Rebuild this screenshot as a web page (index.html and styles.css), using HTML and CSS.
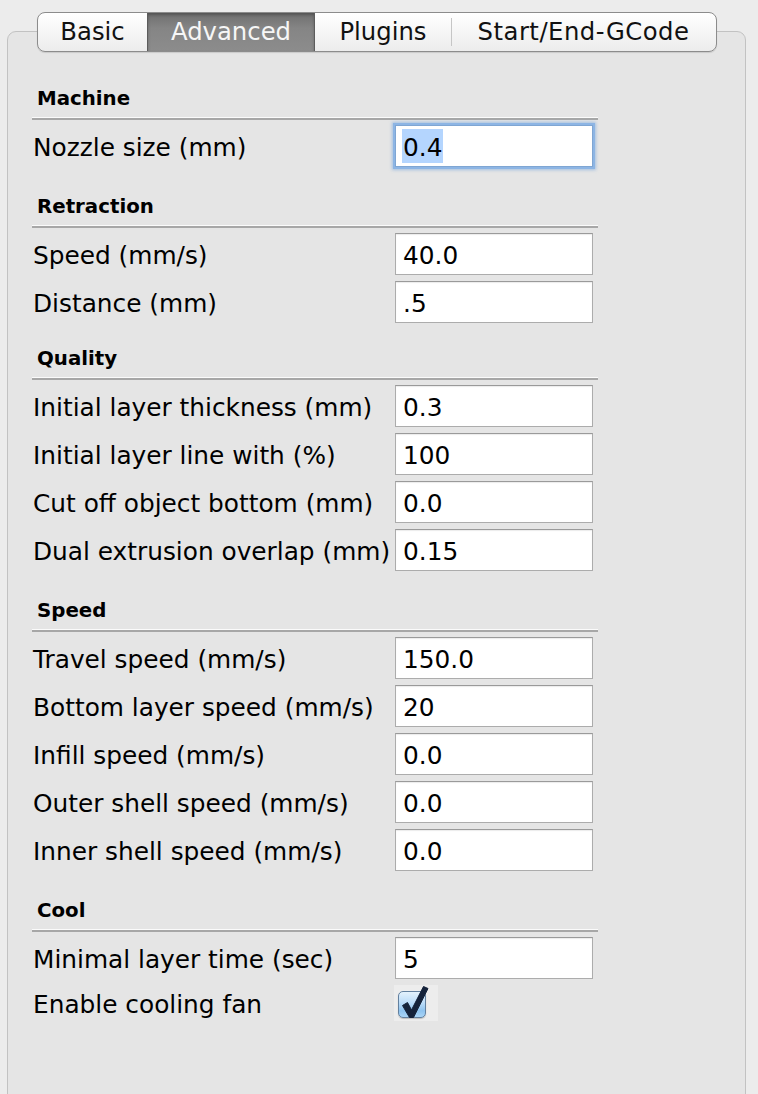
FILE: index.html
```html
<!DOCTYPE html>
<html lang="en">
<head>
<meta charset="utf-8">
<title>Advanced settings</title>
<link rel="stylesheet" href="styles.css">
</head>
<body>
<div class="window">
  <nav class="tabs">
    <div class="tab tab--basic">Basic</div>
    <div class="tab tab--active">Advanced</div>
    <div class="tab tab--plugins">Plugins</div>
    <div class="tab tab--gcode">Start/End-GCode</div>
  </nav>
  <div class="panel">
    <section class="section section--first">
      <h2 class="section-head">Machine</h2>
      <div class="sep"></div>
      <div class="rows">
        <div class="row"><span class="label">Nozzle size (mm)</span><div class="field field--focus"><span class="sel">0.4</span></div></div>
      </div>
    </section>
    <section class="section">
      <h2 class="section-head">Retraction</h2>
      <div class="sep"></div>
      <div class="rows">
        <div class="row"><span class="label">Speed (mm/s)</span><div class="field">40.0</div></div>
        <div class="row"><span class="label">Distance (mm)</span><div class="field">.5</div></div>
      </div>
    </section>
    <section class="section section--tight">
      <h2 class="section-head">Quality</h2>
      <div class="sep"></div>
      <div class="rows">
        <div class="row"><span class="label">Initial layer thickness (mm)</span><div class="field">0.3</div></div>
        <div class="row"><span class="label">Initial layer line with (%)</span><div class="field">100</div></div>
        <div class="row"><span class="label">Cut off object bottom (mm)</span><div class="field">0.0</div></div>
        <div class="row"><span class="label">Dual extrusion overlap (mm)</span><div class="field">0.15</div></div>
      </div>
    </section>
    <section class="section">
      <h2 class="section-head">Speed</h2>
      <div class="sep"></div>
      <div class="rows">
        <div class="row"><span class="label">Travel speed (mm/s)</span><div class="field">150.0</div></div>
        <div class="row"><span class="label">Bottom layer speed (mm/s)</span><div class="field">20</div></div>
        <div class="row"><span class="label">Infill speed (mm/s)</span><div class="field">0.0</div></div>
        <div class="row"><span class="label">Outer shell speed (mm/s)</span><div class="field">0.0</div></div>
        <div class="row"><span class="label">Inner shell speed (mm/s)</span><div class="field">0.0</div></div>
      </div>
    </section>
    <section class="section">
      <h2 class="section-head">Cool</h2>
      <div class="sep"></div>
      <div class="rows">
        <div class="row"><span class="label">Minimal layer time (sec)</span><div class="field">5</div></div>
        <div class="row row--check"><span class="label">Enable cooling fan</span>
          <div class="check">
            <div class="check-box"></div>
            <svg class="check-mark" width="44" height="36" viewBox="0 0 44 36">
              <path d="M8.5 20.5 L13.5 17.5 L17.5 25 L29.5 1.5 L34 3.5 L19.5 32.5 L15.5 32.5 Z" fill="#14223a" stroke="#14223a" stroke-width="1" stroke-linejoin="round"/>
            </svg>
          </div>
        </div>
      </div>
    </section>
  </div>
</div>
</body>
</html>
```
FILE: styles.css
```css
html, body {
  margin: 0;
  padding: 0;
  overflow: hidden;
  background: #ececec;
}

body {
  font-family: "DejaVu Sans", "Liberation Sans", sans-serif;
  color: #000;
}

.window {
  padding-top: 12px;
  height: 1094px;
  box-sizing: border-box;
}

.tabs {
  position: relative;
  z-index: 2;
  display: flex;
  margin-left: 37px;
  width: 680px;
  height: 40px;
  box-sizing: border-box;
  border: 1px solid #8c8c8c;
  border-radius: 8px;
  background: linear-gradient(#ffffff, #f6f6f6 50%, #ececec);
  box-shadow: 0 1px 1px rgba(0, 0, 0, 0.12);
  overflow: hidden;
}

.tab {
  position: relative;
  display: flex;
  align-items: center;
  justify-content: center;
  font-size: 24.3px;
  color: #111;
  box-sizing: border-box;
  padding-bottom: 2px;
}

.tab--basic { width: 109px; }
.tab--active {
  width: 168px;
  color: #f6f6f6;
  background: linear-gradient(#6e6e6e, #858585 40%, #8c8c8c);
  border-left: 1px solid #5c5c5c;
  border-right: 1px solid #5c5c5c;
  box-shadow: inset 0 2px 3px rgba(0, 0, 0, 0.25);
}
.tab--plugins { width: 136px; }
.tab--gcode { flex: 1; letter-spacing: 0.5px; }

.tab--gcode::before {
  content: "";
  position: absolute;
  left: 0;
  top: 5px;
  bottom: 5px;
  width: 1px;
  background: #c6c6c6;
}

.panel {
  margin: -21px 0 0 7px;
  width: 739px;
  height: 1100px;
  box-sizing: border-box;
  border: 1px solid #c2c2c2;
  border-radius: 9px;
  background: #e5e5e5;
  padding: 55px 0 0 25px;
}

.section { margin-top: 28px; }
.section--first { margin-top: 0; }
.section--tight { margin-top: 24px; }

.section-head {
  margin: 0 0 6px 4px;
  height: 24px;
  font-size: 19.8px;
  line-height: 24px;
  font-weight: bold;
}

.sep {
  margin-left: -1px;
  width: 566px;
  height: 2px;
  border-top: 1px solid #fbfbfb;
  background: #a7a7a7;
}

.rows {
  display: flex;
  flex-direction: column;
  gap: 6px;
  margin-top: 5px;
}

.row {
  display: flex;
  align-items: center;
  height: 42px;
}

.label {
  flex: none;
  width: 362px;
  font-size: 24.8px;
  white-space: nowrap;
  padding-top: 2px;
}

.field {
  width: 198px;
  height: 42px;
  box-sizing: border-box;
  border: 1px solid #acacac;
  border-top-color: #9a9a9a;
  background: #fff;
  box-shadow: inset 0 1px 1px rgba(0, 0, 0, 0.08);
  display: flex;
  align-items: center;
  padding-left: 7px;
  padding-top: 2px;
  font-size: 24.8px;
}

.field--focus {
  border-color: #7fa6d3;
  box-shadow: 0 0 0 2px #8db5e4, 0 0 3px 3px rgba(110, 160, 220, 0.55);
  padding-top: 0;
}

.sel {
  background: #b4d5fe;
  height: 34px;
  display: flex;
  align-items: center;
  padding: 2px 1px 0;
  box-sizing: border-box;
  margin-left: -1px;
}

.row--check { height: 36px; }

.check {
  position: relative;
  width: 44px;
  height: 36px;
  margin-left: -1px;
  background: #ededed;
}

.check-box {
  position: absolute;
  left: 4px;
  top: 6px;
  width: 28px;
  height: 27px;
  box-sizing: border-box;
  border: 1px solid #62809f;
  border-radius: 5px;
  background: linear-gradient(#e4f2fd, #b9dbf8 45%, #8ec3ef 75%, #a9d4f6);
  box-shadow: 0 1px 1px rgba(0, 0, 0, 0.2);
}

.check-mark {
  position: absolute;
  left: 0;
  top: 0;
}
```
